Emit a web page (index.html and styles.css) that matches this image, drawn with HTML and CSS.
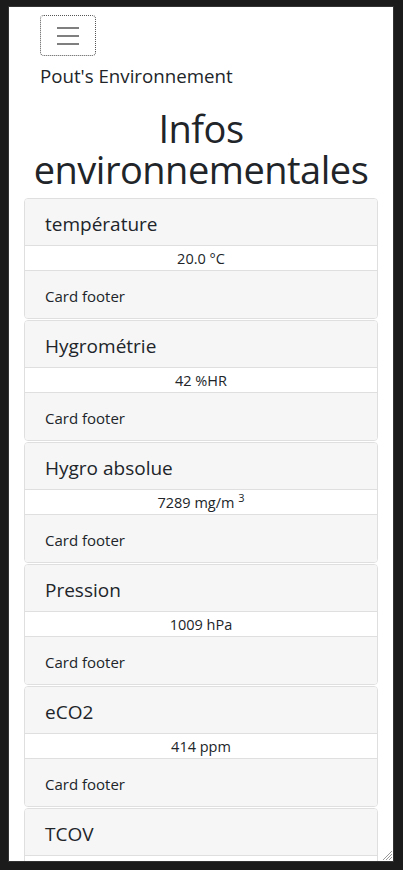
FILE: index.html
```html
<!DOCTYPE html>
<html lang="fr">
<head>
<meta charset="utf-8">
<title>Pout's Environnement</title>
<link rel="stylesheet" href="styles.css">
</head>
<body>
<div class="frame">
  <div class="container">
    <nav class="navbar">
      <button class="toggler" type="button" aria-label="Menu">
        <svg class="toggler-icon" viewBox="0 0 30 30" width="30" height="30"><path d="M4 7h22M4 15h22M4 23h22" stroke="rgba(0,0,0,0.5)" stroke-width="2" stroke-linecap="butt" fill="none"/></svg>
      </button>
      <a class="brand" href="#">Pout's Environnement</a>
    </nav>
    <h1 class="title">Infos environnementales</h1>
    <div class="card">
      <div class="card-header">température</div>
      <div class="card-body">20.0 °C</div>
      <div class="card-footer">Card footer</div>
    </div>
    <div class="card">
      <div class="card-header">Hygrométrie</div>
      <div class="card-body">42 %HR</div>
      <div class="card-footer">Card footer</div>
    </div>
    <div class="card">
      <div class="card-header">Hygro absolue</div>
      <div class="card-body">7289 mg/m <sup>3</sup></div>
      <div class="card-footer">Card footer</div>
    </div>
    <div class="card">
      <div class="card-header">Pression</div>
      <div class="card-body">1009 hPa</div>
      <div class="card-footer">Card footer</div>
    </div>
    <div class="card">
      <div class="card-header">eCO2</div>
      <div class="card-body">414 ppm</div>
      <div class="card-footer">Card footer</div>
    </div>
    <div class="card">
      <div class="card-header">TCOV</div>
      <div class="card-body"></div>
    </div>
  </div>
  <svg class="grip" viewBox="0 0 12 12" width="12" height="12"><path d="M11 2L2 11M11 5L5 11M11 8L8 11" stroke="#9a9a9a" stroke-width="1" fill="none"/></svg>
</div>
</body>
</html>
```

FILE: styles.css
```css
html, body {
  margin: 0;
  padding: 0;
  background: #1b1b1b;
}
body {
  padding: 7px 10px 9px 9px;
  font-family: "Open Sans", "Noto Sans", sans-serif;
  color: #212529;
}
.frame {
  position: relative;
  width: 384px;
  height: 854px;
  overflow: hidden;
  background: #fff;
  box-shadow: 0 0 0 1px #333;
}
.container {
  padding: 0 15px;
}
.navbar {
  display: flex;
  flex-direction: column;
  align-items: flex-start;
  padding: 8px 16px;
}
.toggler {
  width: 56px;
  height: 41px;
  padding: 0;
  display: flex;
  align-items: center;
  justify-content: center;
  background: transparent;
  border: 1px dotted #555;
  border-radius: 4px;
}
.toggler-icon {
  display: block;
}
.brand {
  display: block;
  padding: 5px 0;
  font-size: 18.7px;
  line-height: 30px;
  color: #212529;
  text-decoration: none;
}
.title {
  margin: 4px 0 8px;
  font-size: 38px;
  letter-spacing: -0.5px;
  font-weight: 400;
  line-height: 41px;
  text-align: center;
}
.card {
  border: 1px solid #dfdfdf;
  border-radius: 4px;
  margin-bottom: 1px;
  overflow: hidden;
  background: #fff;
}
.card-header {
  box-sizing: border-box;
  height: 47px;
  display: flex;
  align-items: center;
  padding: 3px 20px 0;
  background: #f6f6f7;
  border-bottom: 1px solid #dfdfdf;
  font-size: 19px;
}
.card-body {
  box-sizing: border-box;
  height: 24px;
  padding-top: 2px;
  line-height: 22px;
  text-align: center;
  font-size: 14.5px;
}
.card-body sup {
  font-size: 11px;
  line-height: 0;
}
.card-footer {
  box-sizing: border-box;
  height: 48px;
  padding: 3px 20px 0;
  line-height: 44px;
  background: #f6f6f7;
  border-top: 1px solid #dfdfdf;
  font-size: 15px;
}
.grip {
  position: absolute;
  right: 0;
  bottom: 0;
}
```
